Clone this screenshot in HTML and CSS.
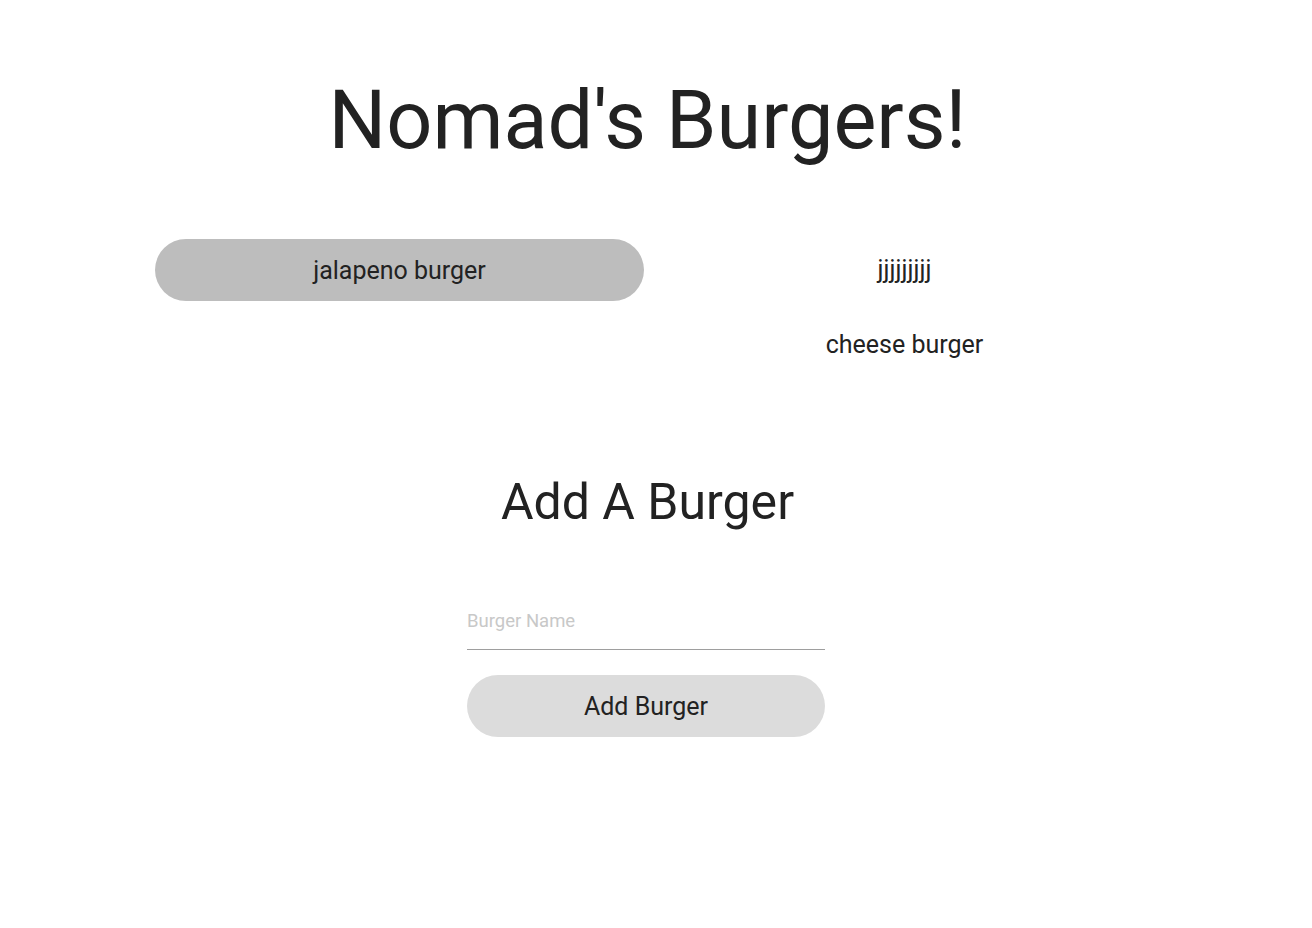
FILE: index.html
```html
<!DOCTYPE html>
<html lang="en">
<head>
<meta charset="utf-8">
<title>Nomad's Burgers!</title>
<link rel="stylesheet" href="styles.css">
</head>
<body>
<div class="page">
  <h1 class="title">Nomad's Burgers!</h1>
  <div class="lists">
    <div class="col">
      <button class="burger">jalapeno burger</button>
    </div>
    <div class="col">
      <div class="eaten">jjjjjjjjj</div>
      <div class="eaten">cheese burger</div>
    </div>
  </div>
  <h2 class="subtitle">Add A Burger</h2>
  <form class="add-form">
    <input class="name-input" type="text" placeholder="Burger Name">
    <button type="button" class="add-btn">Add Burger</button>
  </form>
</div>
</body>
</html>
```

FILE: styles.css
```css
html, body {
  margin: 0;
  padding: 0;
  background: #ffffff;
}
body {
  font-family: Roboto, "Liberation Sans", sans-serif;
  color: #222222;
}
.page {
  width: 1295px;
}
.title {
  font-size: 81px;
  font-weight: 400;
  line-height: 88px;
  text-align: center;
  margin: 77px 0 0 0;
}
.lists {
  display: grid;
  grid-template-columns: 505px 505px;
  width: 1010px;
  margin: 74px 0 0 147px;
}
.col {
  display: flex;
  flex-direction: column;
  align-items: center;
  padding: 0 8px;
  gap: 13px;
}
.burger {
  width: 100%;
  height: 62px;
  border: none;
  border-radius: 31px;
  background: #bdbdbd;
  font-family: inherit;
  font-size: 25px;
  color: #222222;
  padding: 0;
}
.eaten {
  height: 62px;
  line-height: 62px;
  font-size: 25px;
  text-align: center;
}
.subtitle {
  font-size: 50px;
  font-weight: 400;
  line-height: 60px;
  text-align: center;
  margin: 96px 0 0 0;
}
.add-form {
  width: 358px;
  margin: 61px 0 0 467px;
  display: flex;
  flex-direction: column;
}
.name-input {
  border: none;
  border-bottom: 1px solid #9e9e9e;
  outline: none;
  height: 56px;
  padding: 0;
  font-family: inherit;
  font-size: 18.5px;
  color: #222222;
  background: transparent;
}
.name-input::placeholder {
  color: #c8c8c8;
}
.add-btn {
  margin-top: 25px;
  height: 62px;
  border: none;
  border-radius: 31px;
  background: #dcdcdc;
  font-family: inherit;
  font-size: 25px;
  color: #222222;
  padding: 0;
}
```
